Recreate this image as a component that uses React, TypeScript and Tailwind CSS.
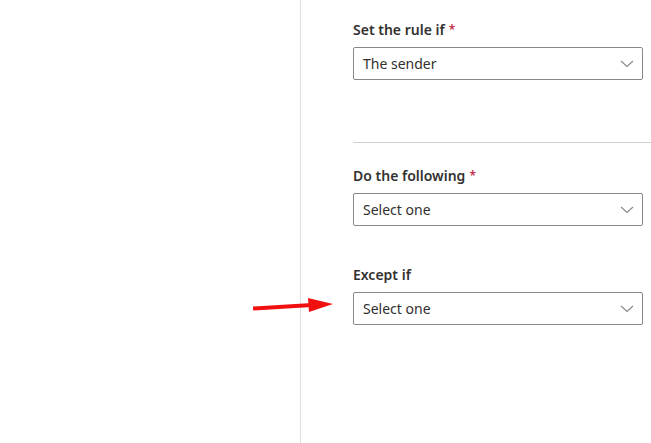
function Chevron() {
  return (
    <svg width="14" height="8" viewBox="0 0 14 8" className="text-[#8a8886]">
      <polyline points="1,1 7,6.5 13,1" fill="none" stroke="currentColor" strokeWidth="1.1" />
    </svg>
  )
}

function Field({ label, value, required }: { label: string; value: string; required?: boolean }) {
  return (
    <div>
      <div className="text-[14px] leading-[20px] font-semibold text-[#323130]">
        {label}
        {required && <span className="ml-[4px] text-[12px] align-top text-[#c4314b]">*</span>}
      </div>
      <div className="mt-[7px] h-[33px] flex items-center justify-between rounded-[2px] border border-[#8a8886] bg-white pl-[9px] pr-[8px]">
        <span className="text-[14px] text-[#323130]">{value}</span>
        <Chevron />
      </div>
    </div>
  )
}

export default function App() {
  return (
    <div
      className="relative flex w-[651px] h-[443px] overflow-hidden bg-white"
      style={{ fontFamily: '"Noto Sans", "Open Sans", sans-serif' }}
    >
      {/* left blank area */}
      <div className="w-[301px] h-full border-r border-[#e1dfdd]" />

      {/* rule panel */}
      <div className="flex-1 pl-[52px] pr-[8px] pt-[20px]">
        <Field label="Set the rule if" value="The sender" required />

        <div className="mt-[62px] -mr-[8px] h-px bg-[#d2d0ce]" />

        <div className="mt-[23px]">
          <Field label="Do the following" value="Select one" required />
        </div>

        <div className="mt-[39px]">
          <Field label="Except if" value="Select one" />
        </div>
      </div>

      {/* red annotation arrow */}
      <svg className="absolute left-[250px] top-[294px]" width="90" height="24" viewBox="0 0 90 24">
        <line x1="3" y1="14.5" x2="62" y2="11" stroke="#f01010" strokeWidth="4" />
        <polygon points="58,4 83,10 59,18" fill="#f01010" />
      </svg>
    </div>
  )
}
